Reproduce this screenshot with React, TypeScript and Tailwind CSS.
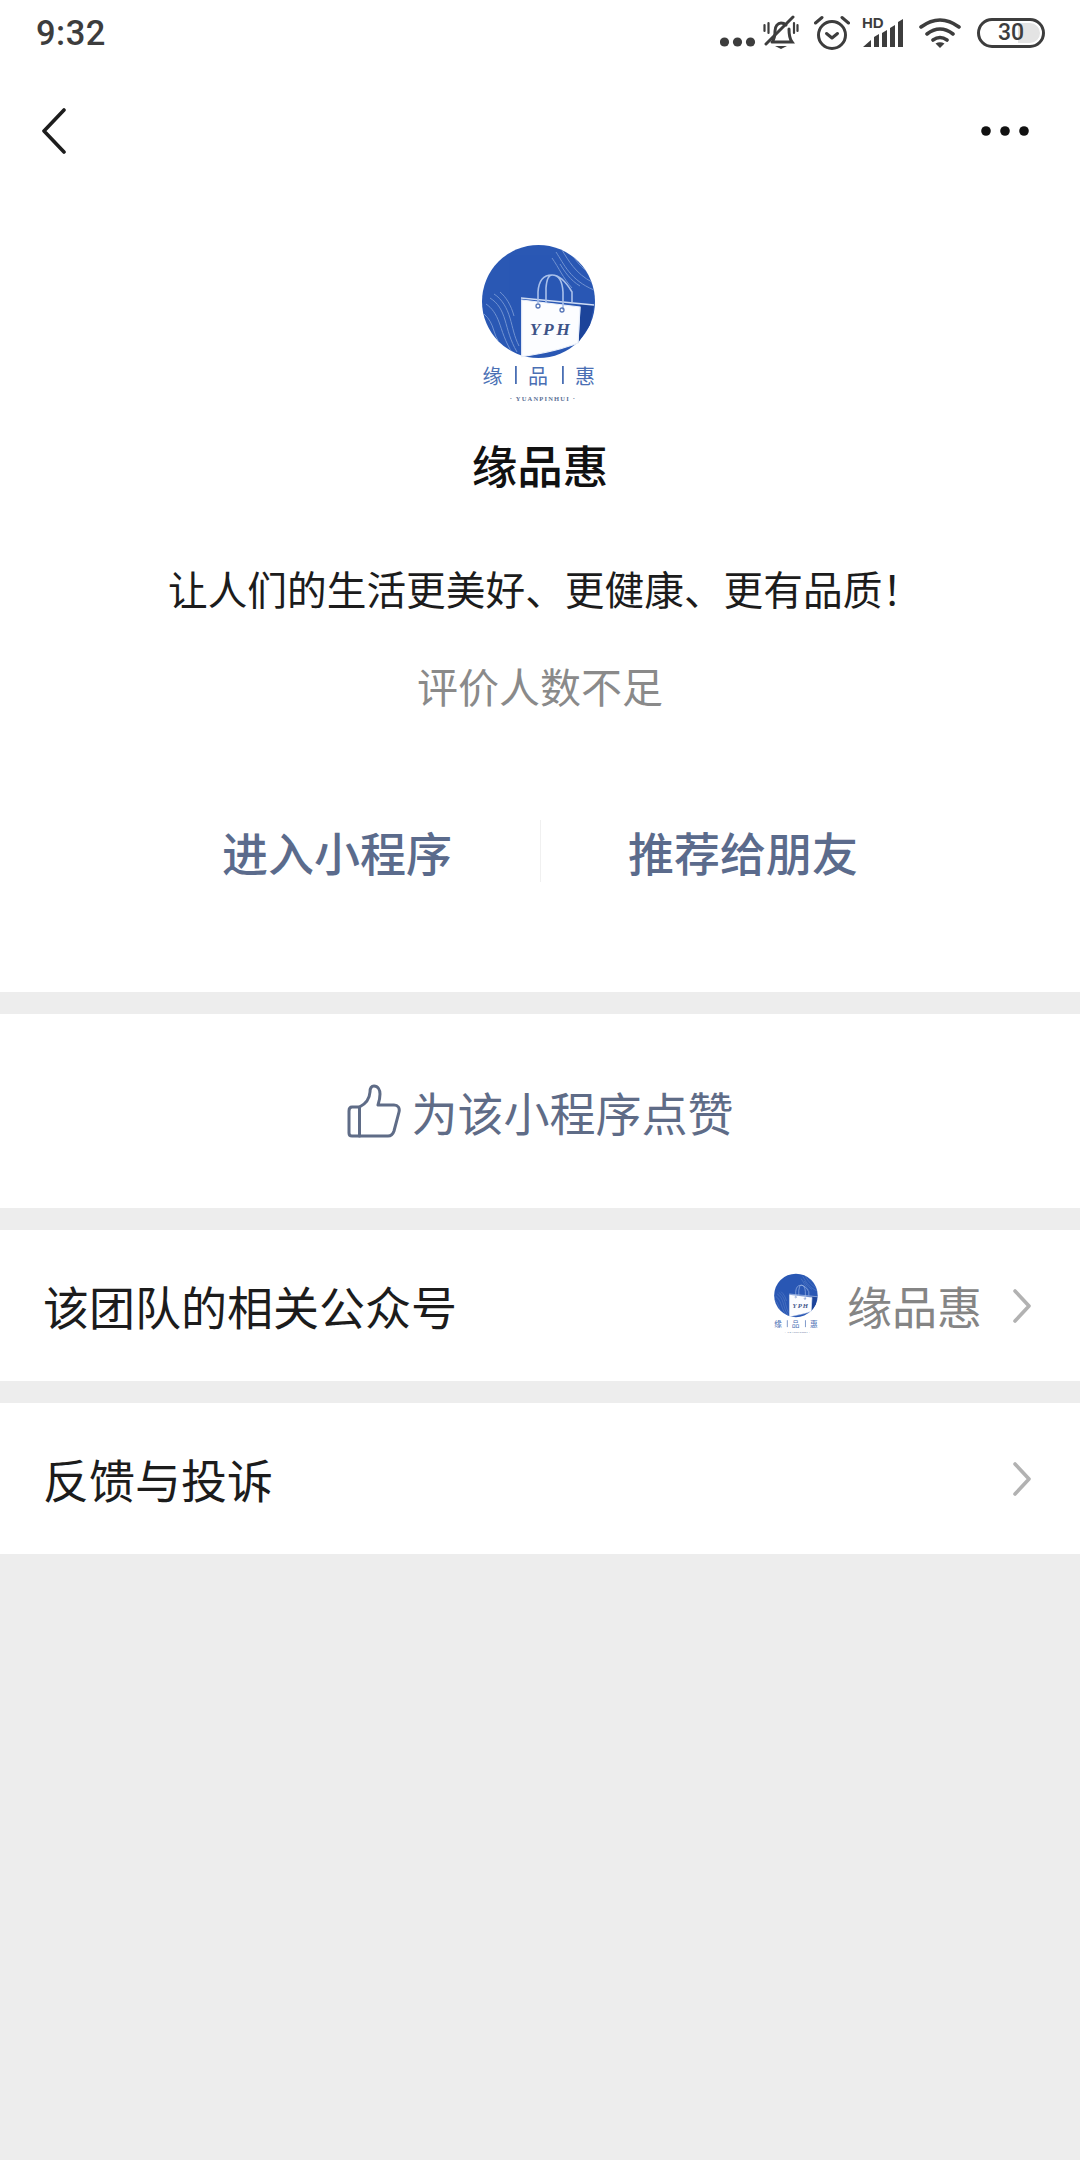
const cjk = "font-['Noto_Sans_CJK_SC','Noto_Sans',sans-serif]";

function Logo({ className, small }: { className: string; small?: boolean }) {
  const id = small ? "cs" : "cl";
  return (
    <svg viewBox="0 0 200 200" className={className}>
      <defs>
        <clipPath id={id}>
          <circle cx="98.500" cy="81.500" r="56.500" />
        </clipPath>
      </defs>
      <circle cx="98.500" cy="81.500" r="56.500" fill="#2a58b4" />
      <g clipPath={`url(#${id})`} fill="none" stroke="#7d9cd6" strokeWidth="1" opacity="0.85">
        <path d="M46 84c6 4 10 10 13 18s6 20 14 32M50 78c8 5 12 12 15 22s5 20 12 32M44 94c5 4 8 10 10 17s6 14 11 20M54 74c8 5 13 14 16 24s4 18 9 28M42 102c4 4 6 8 8 14s5 10 9 14M60 72c6 5 11 13 14 24" />
        <path d="M122 30c6 10 14 24 30 32M128 28c6 10 12 20 26 28M116 32c8 12 14 28 38 38M112 38c7 10 11 20 20 30M134 30c5 8 10 14 20 20M120 44c5 8 10 16 20 22" />
      </g>
      <path d="M140 84l14 1-4 20-12 18z" fill="#1c449a" />
      <path d="M81 78l73 7" stroke="#cfdcf3" strokeWidth="1.500" fill="none" />
      <path d="M140 87l-2 36" stroke="#cfdcf3" strokeWidth="1" fill="none" />
      <path d="M81.700 80l58.300 7-2 36q-20 8-56.300 13.700z" fill="#fcfdff" stroke="#e9effa" strokeWidth="1.200" />
      <path d="M98 83V72q1-17 14-17 10 0 11 17v18M106 83V68q1-13 6-13 10 0 20 17v10" fill="none" stroke="#a9c0ea" strokeWidth="1.600" />
      <circle cx="98" cy="86" r="2" fill="none" stroke="#5676b8" strokeWidth="1.300" />
      <circle cx="122" cy="90" r="2" fill="none" stroke="#5676b8" strokeWidth="1.300" />
      <text x="111" y="115" textAnchor="middle" fontFamily="'Liberation Serif',serif" fontSize="17.500" fontStyle="italic" fontWeight="700" fill="#3e5488" letterSpacing="2.500">YPH</text>
      <text x="52.500" y="164" textAnchor="middle" fontFamily="'Noto Sans CJK SC',sans-serif" fontSize="20" fill="#4a6fb4">缘</text>
      <rect x="75" y="146" width="1.800" height="18" fill="#4a6fb4" />
      <text x="98" y="164" textAnchor="middle" fontFamily="'Noto Sans CJK SC',sans-serif" fontSize="20" fill="#4a6fb4">品</text>
      <rect x="122" y="146" width="1.800" height="18" fill="#4a6fb4" />
      <text x="145" y="164" textAnchor="middle" fontFamily="'Noto Sans CJK SC',sans-serif" fontSize="20" fill="#4a6fb4">惠</text>
      <text x="103" y="180.500" textAnchor="middle" fontFamily="'Liberation Serif',serif" fontSize="6.500" fontWeight="700" fill="#5a6f95" letterSpacing="1.200">· YUANPINHUI ·</text>
    </svg>
  );
}

function Chevron() {
  return (
    <svg viewBox="0 0 20 36" className="w-[20px] h-[36px]" fill="none" stroke="#b2b2b2" strokeWidth="3.600" strokeLinecap="round" strokeLinejoin="round">
      <path d="M3 3l14 15L3 33" />
    </svg>
  );
}

function StatusIcons() {
  const c = "#3d3d3d";
  return (
    <div className="flex items-center mr-[35px]">
      <svg viewBox="0 0 36 10" className="w-[36px] h-[10px] mt-[18px] mr-[7px]" fill={c}>
        <circle cx="4.500" cy="5" r="4.600" /><circle cx="17.500" cy="5" r="4.600" /><circle cx="30.500" cy="5" r="4.600" />
      </svg>
      <svg viewBox="0 0 36 36" className="w-[36px] h-[36px]" fill="none" stroke={c} strokeWidth="3" strokeLinecap="round">
        <path d="M10 25c2-2 2-5 2-9 0-5 3-8 6-8 2 0 4 1 5 2M26 14c0 5 0 9 3 13H9" />
        <path d="M3 29L30 2" />
        <path d="M12 31h12l-6 3z" fill={c} stroke="none" />
        <path d="M1.500 10v6M5.500 8v10M31 8v10M34.500 10v6" strokeWidth="2.200" />
      </svg>
      <svg viewBox="0 0 36 36" className="w-[36px] h-[36px] ml-[15px]" fill="none" stroke={c} strokeWidth="3" strokeLinecap="round" strokeLinejoin="round">
        <circle cx="18" cy="20" r="13.500" />
        <path d="M12.500 18.500l5.500 4.500 5.500-4.500" />
        <path d="M1.500 8L8 2.500M34.500 8L28 2.500" />
      </svg>
      <div className="relative w-[42px] h-[32px] ml-[11px]">
        <span className="absolute left-[1px] top-[-2px] text-[15px] leading-[16px] font-bold text-[#3d3d3d] font-['Liberation_Sans',sans-serif]">HD</span>
        <svg viewBox="0 0 42 32" className="w-[42px] h-[32px]" fill={c}>
          <path d="M2 30l8-7v7zM13 20l5-3v13h-5zM21 16l5-3v17h-5zM29 11l5-3v22h-5zM37 5l5-3v28h-5z" />
        </svg>
      </div>
      <svg viewBox="0 0 42 32" className="w-[42px] h-[32px] ml-[16px]" fill="none" stroke={c} strokeWidth="3.600" strokeLinecap="round">
        <path d="M2 10Q21-4 40 10M8 17q13-10 26 0M14 23q7-5 14 0" />
        <path d="M21 31l-4.500-4.500q4.500-2.500 9 0z" fill={c} stroke="none" />
      </svg>
      <div className="relative flex items-center justify-center w-[68px] h-[30px] ml-[16px] rounded-full border-[3px] border-[#3d3d3d] overflow-hidden">
        <div className="absolute right-[2px] top-[2px] bottom-[2px] w-[22px] rounded-r-full bg-[#e4e4e4]" />
        <span className="relative text-[23px] leading-[24px] font-medium text-[#3d3d3d] font-['Roboto',sans-serif]">30</span>
      </div>
    </div>
  );
}

function Row({ label, children }: { label: string; children?: React.ReactNode }) {
  return (
    <div className="flex items-center justify-between h-[151px] bg-white pl-[43px] pr-[48px]">
      <span className="mb-[2px] text-[46px] leading-none text-[#1c1c1c]">{label}</span>
      <div className="flex items-center">{children}<Chevron /></div>
    </div>
  );
}

export default function App() {
  return (
    <div className={`flex flex-col w-[1080px] h-[2160px] bg-[#ededed] ${cjk}`}>
      <div className="flex flex-col h-[992px] bg-white">
        <div className="flex items-center justify-between h-[66px]">
          <span className="ml-[36px] text-[34.500px] leading-none font-medium tracking-[0.5px] text-[#3d3d3d] font-['Roboto',sans-serif]">9:32</span>
          <StatusIcons />
        </div>
        <div className="flex items-center justify-between h-[130px] pl-[42px] pr-[51px]">
          <svg viewBox="0 0 24 46" className="w-[24px] h-[46px]" fill="none" stroke="#1d1d1d" strokeWidth="3.600" strokeLinecap="round" strokeLinejoin="round">
            <path d="M22 2L2 23l20 21" />
          </svg>
          <svg viewBox="0 0 48 10" className="w-[48px] h-[10px]" fill="#111">
            <circle cx="5" cy="5" r="4.800" /><circle cx="24" cy="5" r="4.800" /><circle cx="43" cy="5" r="4.800" />
          </svg>
        </div>
        <Logo className="w-[200px] h-[200px] self-center mt-[24px]" />
        <h1 className="mt-[17px] text-center text-[45.500px] leading-[54px] font-medium text-[#111]">缘品惠</h1>
        <p className="mt-[71px] pl-[10px] text-center text-[39.700px] leading-[52px] text-[#1c1c1c]">{"让人们的生活更美好、更健康、更有品质\uFF01"}</p>
        <p className="mt-[45px] text-center text-[41px] leading-[52px] text-[#8a8a8a]">评价人数不足</p>
        <div className="flex justify-center items-center mt-[109px]">
          <span className="w-[405px] text-center text-[46px] leading-[60px] font-medium text-[#5b6b8c]">进入小程序</span>
          <div className="w-px h-[62px] bg-[#f0f0f0]" />
          <span className="w-[405px] text-center text-[46px] leading-[60px] font-medium text-[#5b6b8c]">推荐给朋友</span>
        </div>
      </div>

      <div className="flex items-center justify-center h-[194px] mt-[22px] bg-white">
        <svg viewBox="0 0 54 54" className="w-[54px] h-[54px]" fill="none" stroke="#5f6c87" strokeWidth="3" strokeLinecap="round" strokeLinejoin="round">
          <path d="M2 27q0-4 3-4h7.500v29H5q-3 0-3-3z" />
          <path d="M12.500 23c6-3 10-8 10.500-15 0-4 1.500-6 4-6 4 0 6 4 6 8 0 5-1 8-2 11h16c4 0 6 3 5 7l-5 19c-1 3-3 5-6 5H12.500" />
        </svg>
        <span className="ml-[11px] text-[46px] leading-none text-[#5f6c87]">为该小程序点赞</span>
      </div>

      <div className="mt-[22px]">
        <Row label="该团队的相关公众号">
          <Logo small className="w-[77px] h-[77px] mb-[7px] mr-[-1px]" />
          <span className="ml-[13px] mr-[30px] text-[45px] leading-none text-[#858585]">缘品惠</span>
        </Row>
      </div>
      <div className="mt-[22px]">
        <Row label="反馈与投诉" />
      </div>
    </div>
  );
}
